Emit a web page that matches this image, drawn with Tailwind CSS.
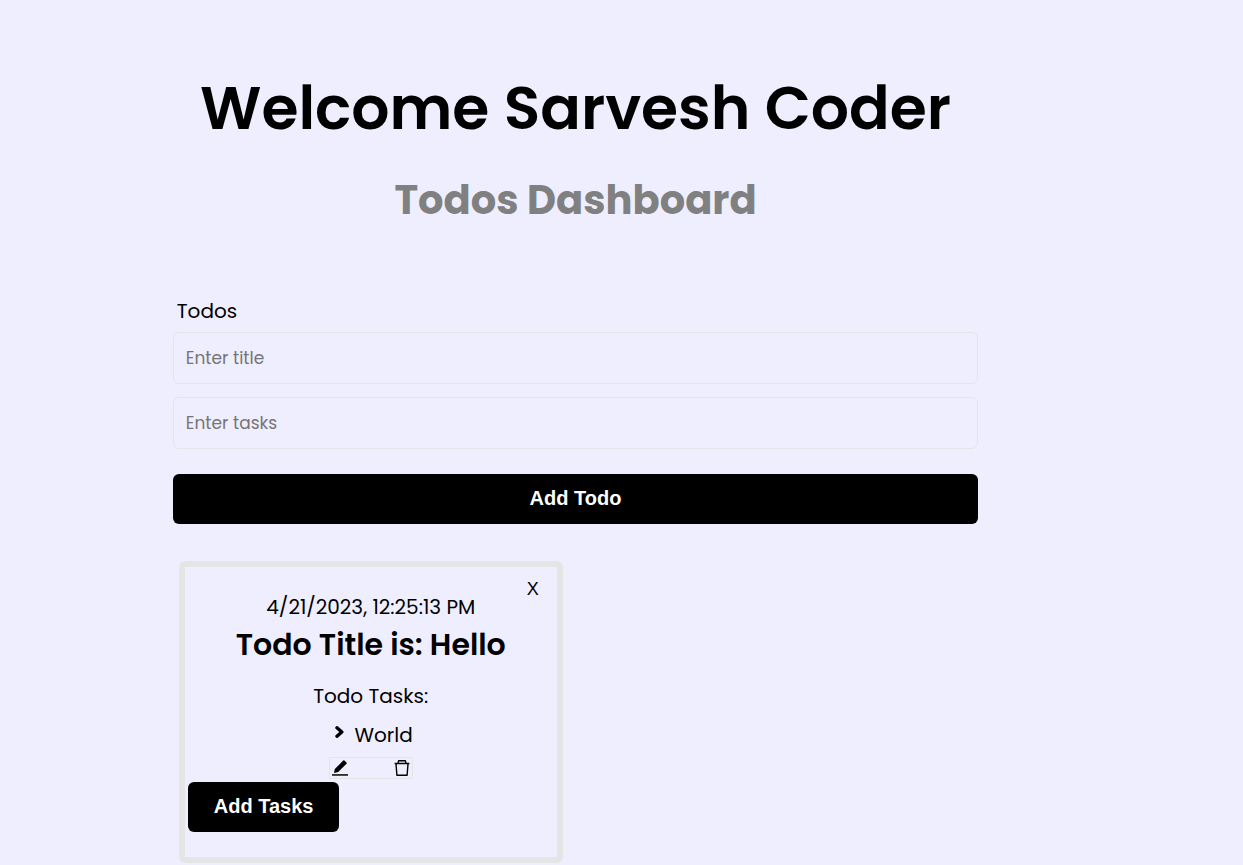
<!DOCTYPE html>
<html lang="en">
<head>
<meta charset="utf-8">
<meta name="viewport" content="width=device-width, initial-scale=1">
<title>Todos Dashboard</title>
<script src="https://cdn.jsdelivr.net/npm/@tailwindcss/browser@4"></script>
</head>
<body class="min-h-screen bg-[#efeeff] font-['Poppins','Inter',sans-serif] text-black">
<main class="mr-[21.3%] ml-[13.9%] pt-16">
  <header class="text-center">
    <h1 class="text-[60px] leading-[88px] font-semibold">Welcome Sarvesh Coder</h1>
    <h2 class="mt-[18px] text-[40px] leading-[60px] font-bold text-[#808080]">Todos Dashboard</h2>
  </header>
  <form class="mt-[66px]">
    <label for="title" class="block pl-1 text-[20px] leading-[30px]">Todos</label>
    <input id="title" type="text" placeholder="Enter title" class="mt-1.5 block h-[52px] w-full rounded-md border border-[#e5e5e5] bg-transparent px-3 text-[17px] placeholder:text-[#757575]">
    <input id="tasks" type="text" aria-label="Tasks" placeholder="Enter tasks" class="mt-[13px] block h-[52px] w-full rounded-md border border-[#e5e5e5] bg-transparent px-3 text-[17px] placeholder:text-[#757575]">
    <button type="button" class="mt-[25px] block h-[50px] w-full rounded-md bg-black pb-0.5 font-['Liberation_Sans',sans-serif] text-[20px] font-bold text-white">Add Todo</button>
  </form>
  <section class="relative mt-[37px] ml-1.5 w-96 max-w-full rounded-md border-6 border-[#e5e5e5] px-[3px] pt-[25px] pb-[25px] text-center">
    <button type="button" class="absolute top-2 right-[18px] font-['Liberation_Sans',sans-serif] text-[18px] leading-7">X</button>
    <p class="text-[20px] leading-[30px]">4/21/2023, 12:25:13 PM</p>
    <h3 class="text-[30px] leading-[45px] font-semibold">Todo Title is: Hello</h3>
    <p class="mt-3.5 text-[20px] leading-[30px]">Todo Tasks:</p>
    <ul class="mx-auto mt-2 w-[84px]">
      <li>
        <div class="flex items-center justify-between pl-1.5 text-[20px] leading-[32px]">
          <svg class="mb-1.5 h-3 w-[9px]" viewBox="0 0 9 12" fill="none" stroke="currentColor" stroke-width="3.4" stroke-linecap="round" stroke-linejoin="round"><path d="M2 1.8l4.8 4.2L2 10.2"/></svg>
          <span>World</span>
        </div>
        <div class="mt-1.5 flex h-[22px] items-center justify-between border border-[#e5e5e5] px-0.5">
          <button type="button" aria-label="Edit task"><svg class="h-4 w-4" viewBox="0 0 16 16" fill="currentColor"><path d="M2 12.9 2.8 8.9 11.2.6q.6-.5 1.2 0l2.1 2q.5.6 0 1.2l-8.3 8.3z"/><path d="M0 14.2h16v1.5H0z"/></svg></button>
          <button type="button" aria-label="Delete task"><svg class="h-4 w-4" viewBox="0 0 16 16" fill="none" stroke="currentColor" stroke-width="1.4" stroke-linejoin="round"><path d="M.6 3.5h14.8M4 3.3 4.6.8h6.8l.6 2.5M2 3.7l.9 11.5h10.2L14 3.7"/></svg></button>
        </div>
      </li>
    </ul>
    <button type="button" class="mt-[3px] block h-[50px] rounded-md bg-black px-[26px] pb-0.5 font-['Liberation_Sans',sans-serif] text-[20px] font-bold text-white">Add Tasks</button>
  </section>
</main>
</body>
</html>
